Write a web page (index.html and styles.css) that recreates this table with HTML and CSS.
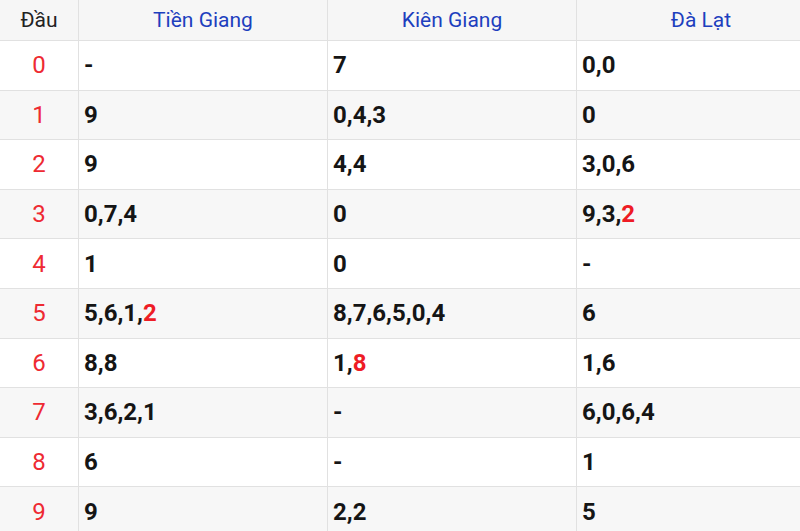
FILE: index.html
```html
<!DOCTYPE html>
<html lang="vi">
<head>
<meta charset="utf-8">
<title>Lô tô đầu</title>
<link rel="stylesheet" href="styles.css">
</head>
<body>
<table class="loto">
  <colgroup>
    <col class="c-head">
    <col class="c-prov">
    <col class="c-prov">
    <col class="c-prov">
  </colgroup>
  <thead>
    <tr>
      <th class="h-dau">Đầu</th>
      <th>Tiền Giang</th>
      <th>Kiên Giang</th>
      <th>Đà Lạt</th>
    </tr>
  </thead>
  <tbody>
    <tr><td class="dau">0</td><td>-</td><td>7</td><td>0,0</td></tr>
    <tr><td class="dau">1</td><td>9</td><td>0,4,3</td><td>0</td></tr>
    <tr><td class="dau">2</td><td>9</td><td>4,4</td><td>3,0,6</td></tr>
    <tr><td class="dau">3</td><td>0,7,4</td><td>0</td><td>9,3,<span class="hl">2</span></td></tr>
    <tr><td class="dau">4</td><td>1</td><td>0</td><td>-</td></tr>
    <tr><td class="dau">5</td><td>5,6,1,<span class="hl">2</span></td><td>8,7,6,5,0,4</td><td>6</td></tr>
    <tr><td class="dau">6</td><td>8,8</td><td>1,<span class="hl">8</span></td><td>1,6</td></tr>
    <tr><td class="dau">7</td><td>3,6,2,1</td><td>-</td><td>6,0,6,4</td></tr>
    <tr><td class="dau">8</td><td>6</td><td>-</td><td>1</td></tr>
    <tr><td class="dau">9</td><td>9</td><td>2,2</td><td>5</td></tr>
  </tbody>
</table>
</body>
</html>
```
FILE: styles.css
```css
html, body {
  margin: 0;
  padding: 0;
  background: #ffffff;
  overflow: hidden;
}

body {
  font-family: Roboto, "Liberation Sans", Arial, sans-serif;
  width: 800px;
  height: 531px;
}

.loto {
  border-collapse: collapse;
  table-layout: fixed;
  width: 826px;
  margin-top: -1px;
  margin-left: -1px;
}

.c-head { width: 79px; }
.c-prov { width: 249px; }

.loto th,
.loto td {
  border: 1px solid #e1e1e1;
  padding: 0 0 0 5px;
  vertical-align: middle;
  white-space: nowrap;
}

.loto th {
  height: 40px;
  padding: 0;
  background: #f6f6f6;
  font-weight: 400;
  font-size: 21px;
  color: #1d3fbe;
  text-align: center;
}

.loto th.h-dau {
  color: #222222;
}

.loto td {
  height: 49.6px;
  box-sizing: border-box;
  font-size: 24px;
  font-weight: 700;
  color: #151515;
}

.loto tbody tr:nth-child(even) td {
  background: #f7f7f7;
}

.loto td.dau {
  padding: 0;
  text-align: center;
  font-weight: 400;
  color: #ee2a32;
}

.hl {
  color: #ee1c25;
}
```
